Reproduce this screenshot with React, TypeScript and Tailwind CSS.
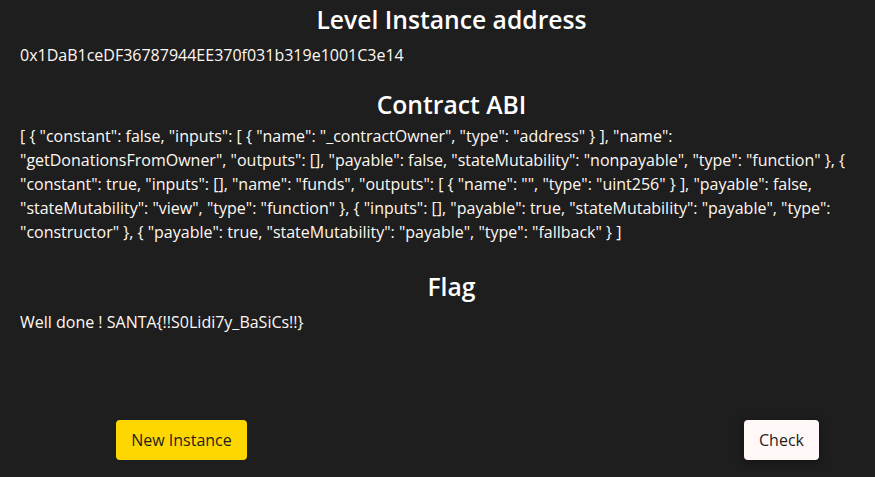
import React from "react";

const abi =
  '[ { "constant": false, "inputs": [ { "name": "_contractOwner", "type": "address" } ], "name": "getDonationsFromOwner", "outputs": [], "payable": false, "stateMutability": "nonpayable", "type": "function" }, { "constant": true, "inputs": [], "name": "funds", "outputs": [ { "name": "", "type": "uint256" } ], "payable": false, "stateMutability": "view", "type": "function" }, { "inputs": [], "payable": true, "stateMutability": "payable", "type": "constructor" }, { "payable": true, "stateMutability": "payable", "type": "fallback" } ]';

export default function App() {
  return (
    <div
      className="w-[875px] h-[477px] bg-[#1e1e1e] text-[#fff8f2] overflow-hidden flex flex-col"
      style={{ fontFamily: '"Open Sans", "Noto Sans", sans-serif' }}
    >
      <div className="px-5">
        <h2 className="mt-1 pl-[28px] text-center text-[24.7px] leading-8 font-semibold text-white">
          Level Instance address
        </h2>
        <p className="mt-[7px] text-[16px] leading-6">0x1DaB1ceDF36787944EE370f031b319e1001C3e14</p>
        <h2 className="mt-[22px] pl-[28px] text-center text-[24.7px] leading-8 font-semibold text-white">
          Contract ABI
        </h2>
        <p className="mt-[3px] text-[16px] leading-6 break-words">{abi}</p>
        <h2 className="mt-[27px] pl-[28px] text-center text-[24.7px] leading-8 font-semibold text-white">
          Flag
        </h2>
        <p className="mt-[7px] text-[16px] leading-6">Well done ! SANTA{"{"}!!S0Lidi7y_BaSiCs!!{"}"}</p>
      </div>
      <div className="mt-[86px] flex justify-between pl-[116px] pr-[56px]">
        <button className="h-10 w-[131px] rounded-[4px] bg-[#ffd700] text-[#1e1e1e] text-[16px] leading-6">
          New Instance
        </button>
        <button className="h-10 w-[75px] rounded-[4px] bg-[#fff8f6] text-[#1e1e1e] text-[16px] leading-6 shadow-[0_2px_8px_rgba(0,0,0,0.4)]">
          Check
        </button>
      </div>
    </div>
  );
}
